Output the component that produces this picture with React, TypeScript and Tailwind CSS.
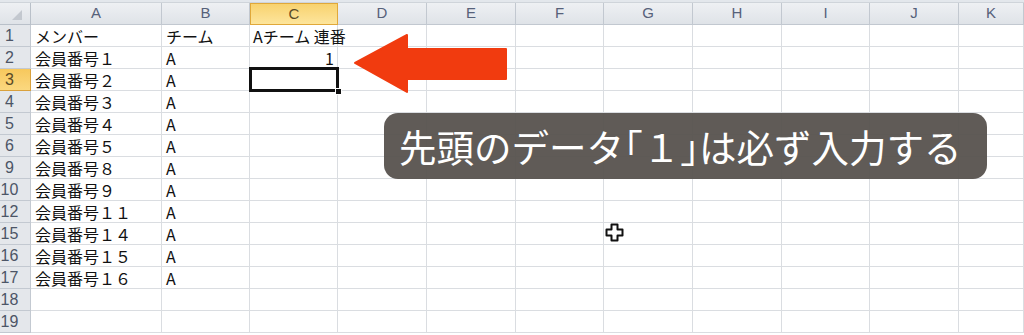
import React from "react";

const cols = ["A", "B", "C", "D", "E", "F", "G", "H", "I", "J", "K"];

type Row = { n: number; a?: string; b?: string; c?: string; cRight?: boolean };

const rows: Row[] = [
  { n: 1, a: "メンバー", b: "チーム", c: "Aチーム 連番" },
  { n: 2, a: "会員番号１", b: "A", c: "1", cRight: true },
  { n: 3, a: "会員番号２", b: "A" },
  { n: 4, a: "会員番号３", b: "A" },
  { n: 5, a: "会員番号４", b: "A" },
  { n: 6, a: "会員番号５", b: "A" },
  { n: 9, a: "会員番号８", b: "A" },
  { n: 10, a: "会員番号９", b: "A" },
  { n: 12, a: "会員番号１１", b: "A" },
  { n: 15, a: "会員番号１４", b: "A" },
  { n: 16, a: "会員番号１５", b: "A" },
  { n: 17, a: "会員番号１６", b: "A" },
  { n: 18 },
  { n: 19 },
];

const cell = "h-[22px] border-r border-b border-[#dadde1] whitespace-nowrap flex items-center";

function Arrow() {
  return (
    <svg className="absolute left-[350px] top-[32px]" width="160" height="64" viewBox="0 0 160 64">
      <polygon
        points="5,31 57,3 57,17 156,17 156,47 57,47 57,60"
        fill="#f13b0f"
        stroke="#f13b0f"
        strokeWidth="2"
        strokeLinejoin="round"
      />
    </svg>
  );
}

function Cursor() {
  return (
    <svg className="absolute left-[604px] top-[222px]" width="22" height="22" viewBox="0 0 22 22">
      <path
        d="M7.5 2.5h6v5h5v6h-5v5h-6v-5h-5v-6h5z"
        fill="#ffffff"
        stroke="#111111"
        strokeWidth="2"
        strokeLinejoin="round"
      />
    </svg>
  );
}

export default function App() {
  return (
    <div className="relative w-[1024px] h-[335px] overflow-hidden bg-white font-['Noto_Sans_CJK_JP','Noto_Sans',sans-serif]">
      <div className="h-[3px] bg-[#e3e7ec] border-b border-[#cfd4da]" />
      <div className="grid grid-cols-[31px_131px_88px_88px_89px_89px_88px_89px_89px_88px_89px_1fr]">
        {/* column headers */}
        <div className="h-[22px] bg-gradient-to-b from-[#eef0f3] to-[#dfe3e8] border-r border-b border-[#b9c0c9] flex items-end justify-end pr-[8px] pb-[4px]">
          <div className="w-0 h-0 border-l-[10px] border-l-transparent border-b-[10px] border-b-[#c3c8cf]" />
        </div>
        {cols.map((c) =>
          c === "C" ? (
            <div
              key={c}
              className="h-[22px] flex items-center justify-center bg-gradient-to-b from-[#f8d26e] to-[#fde59c] border border-[#e0a83a] text-[15px] text-[#5a4a26] font-['Liberation_Sans',sans-serif]"
            >
              {c}
            </div>
          ) : (
            <div
              key={c}
              className="h-[22px] flex items-center justify-center bg-gradient-to-b from-[#eef0f3] to-[#dfe3e8] border-r border-b border-[#c2c8d0] text-[15px] text-[#56617a] font-['Liberation_Sans',sans-serif]"
            >
              {c}
            </div>
          )
        )}

        {/* rows */}
        {rows.map((r) => (
          <React.Fragment key={r.n}>
            <div
              className={
                r.n === 3
                  ? "h-[22px] flex items-center bg-gradient-to-b from-[#f7c85c] to-[#fbd87f] border-r border-b border-[#d9a13d] text-[16px] text-[#5a4a26] font-['Liberation_Sans',sans-serif]"
                  : "h-[22px] flex items-center bg-[#e4e7eb] border-r border-b border-[#c3c9d1] text-[16px] text-[#4c5566] font-['Liberation_Sans',sans-serif]"
              }
            >
              <span className="w-[19px] text-center">{r.n}</span>
            </div>
            <div className={`${cell} pl-[4px] text-[16px] text-[#111]`}>{r.a}</div>
            <div className={`${cell} pl-[4px] text-[16px] text-[#111]`}>{r.b}</div>
            <div className={`${cell} ${r.cRight ? "justify-end pr-[3px]" : "pl-[3px]"} text-[16px] text-[#111]`}>
              {r.c}
            </div>
            {cols.slice(3).map((c) => (
              <div key={c} className={cell} />
            ))}
          </React.Fragment>
        ))}
      </div>

      {/* active cell C3 */}
      <div className="absolute left-[249px] top-[67px] w-[90px] h-[25px] border-[3px] border-[#111]" />
      <div className="absolute left-[335px] top-[88px] w-[7px] h-[7px] bg-[#111] border border-white" />

      <Arrow />

      <div className="absolute left-[384px] top-[113px] w-[603px] h-[66px] rounded-[14px] bg-[#57524e]/95 flex items-center pl-[15px] text-white text-[37.5px] [font-feature-settings:'halt']">
        先頭のデータ「１」は必ず入力する
      </div>

      <Cursor />
    </div>
  );
}
